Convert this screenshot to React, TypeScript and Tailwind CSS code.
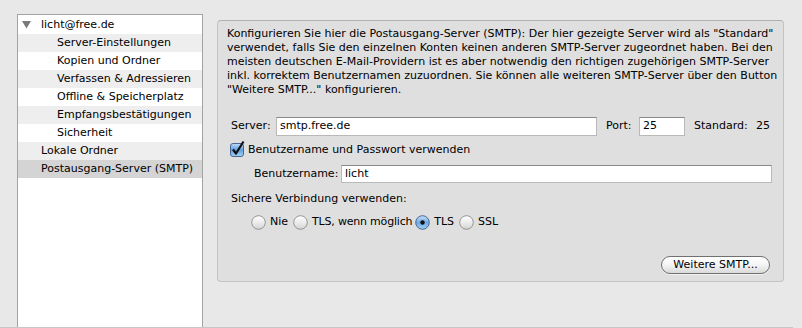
const font = { fontFamily: '"Lucida Grande", "DejaVu Sans", sans-serif' }

const rows = [
  { label: "licht@free.de", level: 0, toggle: true },
  { label: "Server-Einstellungen", level: 1 },
  { label: "Kopien und Ordner", level: 1 },
  { label: "Verfassen & Adressieren", level: 1 },
  { label: "Offline & Speicherplatz", level: 1 },
  { label: "Empfangsbestätigungen", level: 1 },
  { label: "Sicherheit", level: 1 },
  { label: "Lokale Ordner", level: 0 },
  { label: "Postausgang-Server (SMTP)", level: 0, selected: true },
]

const intro = [
  'Konfigurieren Sie hier die Postausgang-Server (SMTP): Der hier gezeigte Server wird als "Standard"',
  "verwendet, falls Sie den einzelnen Konten keinen anderen SMTP-Server zugeordnet haben. Bei den",
  "meisten deutschen E-Mail-Providern ist es aber notwendig den richtigen zugehörigen SMTP-Server",
  "inkl. korrektem Benutzernamen zuzuordnen. Sie können alle weiteren SMTP-Server über den Button",
  '"Weitere SMTP..." konfigurieren.',
]

function Radio({ checked }: { checked?: boolean }) {
  return (
    <svg width="15" height="15" viewBox="0 0 15 15" className="shrink-0">
      <defs>
        <linearGradient id="rOff" x1="0" y1="0" x2="0" y2="1">
          <stop offset="0" stopColor="#ffffff" />
          <stop offset="0.5" stopColor="#ececec" />
          <stop offset="1" stopColor="#d2d2d2" />
        </linearGradient>
        <linearGradient id="rOn" x1="0" y1="0" x2="0" y2="1">
          <stop offset="0" stopColor="#c7e2fb" />
          <stop offset="0.5" stopColor="#6fa9e6" />
          <stop offset="1" stopColor="#9fd0f7" />
        </linearGradient>
      </defs>
      <circle cx="7.5" cy="7.5" r="6.8" fill={checked ? "url(#rOn)" : "url(#rOff)"} stroke={checked ? "#3e5a86" : "#8c8c8c"} strokeWidth="0.9" />
      {checked && <circle cx="7.5" cy="7.5" r="2.2" fill="#111" />}
    </svg>
  )
}

function Checkbox() {
  return (
    <svg width="17" height="17" viewBox="0 0 17 17" className="shrink-0">
      <defs>
        <linearGradient id="cb" x1="0" y1="0" x2="0" y2="1">
          <stop offset="0" stopColor="#bfdcf8" />
          <stop offset="0.5" stopColor="#5f9de0" />
          <stop offset="1" stopColor="#a6d4f8" />
        </linearGradient>
      </defs>
      <rect x="1.5" y="3.5" width="13" height="13" rx="2.5" fill="url(#cb)" stroke="#3e5a86" strokeWidth="0.9" />
      <path d="M4 9.5 L7 13.5 L14.5 1.5" fill="none" stroke="#111" strokeWidth="2.2" strokeLinejoin="round" />
    </svg>
  )
}

const inputCls = "bg-white border border-[#b9b9b9] border-t-[#888888] px-[3px] flex items-center text-black"

export default function App() {
  return (
    <div className="w-[802px] h-[328px] bg-[#e8e8e8] flex flex-col text-[11px] text-black overflow-hidden" style={font}>
      <div className="flex h-[327px]">
        {/* account tree */}
        <div className="ml-[17px] mt-[14px] w-[186px] bg-white border border-b-0 border-[#a3a3a3] flex flex-col pt-px">
          {rows.map((r, i) => (
            <div
              key={r.label}
              className={`h-[18px] flex items-center whitespace-nowrap ${
                r.selected ? "bg-[#d4d4d4]" : i % 2 === 1 ? "bg-[#eeeeee]" : "bg-white"
              } ${r.level === 1 ? "pl-[39px]" : "pl-[23px]"}`}
            >
              {r.toggle && (
                <svg width="10" height="8" viewBox="0 0 10 8" className="-ml-[19px] mr-[9px]">
                  <path d="M0 0 H9 L4.5 7.5 Z" fill="#7a7a7a" />
                </svg>
              )}
              {r.label}
            </div>
          ))}
        </div>

        {/* settings box */}
        <div className="ml-[14px] mt-[20px] w-[567px] h-[262px] bg-[#dfdfdf] border border-[#c3c3c3] border-t-[#b0b0b0] rounded-[4px] flex flex-col pl-[9px] pt-[6px]">
          <div className="leading-[14px] whitespace-nowrap">
            {intro.map((l) => (
              <div key={l}>{l}</div>
            ))}
          </div>

          <div className="mt-[20px] ml-[4px] h-[19px] flex items-center whitespace-nowrap">
            <span className="w-[45px]">Server:</span>
            <div className={`${inputCls} w-[321px] h-[19px]`}>smtp.free.de</div>
            <span className="ml-[9px] w-[33px]">Port:</span>
            <div className={`${inputCls} w-[46px] h-[19px]`}>25</div>
            <span className="ml-[9px] w-[62px]">Standard:</span>
            <span>25</span>
          </div>

          <div className="mt-[4px] ml-[2px] h-[17px] flex items-center gap-[2px] whitespace-nowrap">
            <Checkbox />
            <span className="mt-[3px]">Benutzername und Passwort verwenden</span>
          </div>

          <div className="mt-[8px] ml-[27px] h-[18px] flex items-center whitespace-nowrap">
            <span className="w-[87px]">Benutzername:</span>
            <div className={`${inputCls} w-[431px] h-[18px]`}>licht</div>
          </div>

          <div className="mt-[9px] ml-[4px] h-[14px] flex items-center whitespace-nowrap">Sichere Verbindung verwenden:</div>

          <div className="mt-[8px] ml-[24px] h-[16px] flex items-center whitespace-nowrap">
            <Radio />
            <span className="ml-[4px] mr-[5px]">Nie</span>
            <Radio />
            <span className="ml-[4px] mr-[3px] tracking-[-0.2px]">TLS, wenn möglich</span>
            <Radio checked />
            <span className="ml-[4px] mr-[5px]">TLS</span>
            <Radio />
            <span className="ml-[4px]">SSL</span>
          </div>

          <div className="mt-[26px] flex justify-end pr-[13px]">
            <button
              className="w-[109px] h-[18px] rounded-full border border-[#707070] bg-gradient-to-b from-white via-[#f4f4f4] to-[#d9d9d9] flex items-center justify-center text-[11px] shadow-[0_1px_0_rgba(255,255,255,0.6)]"
              style={font}
            >
              Weitere SMTP...
            </button>
          </div>
        </div>
      </div>
      <div className="h-px w-[793px] bg-[#c6c6c6]" />
    </div>
  )
}
